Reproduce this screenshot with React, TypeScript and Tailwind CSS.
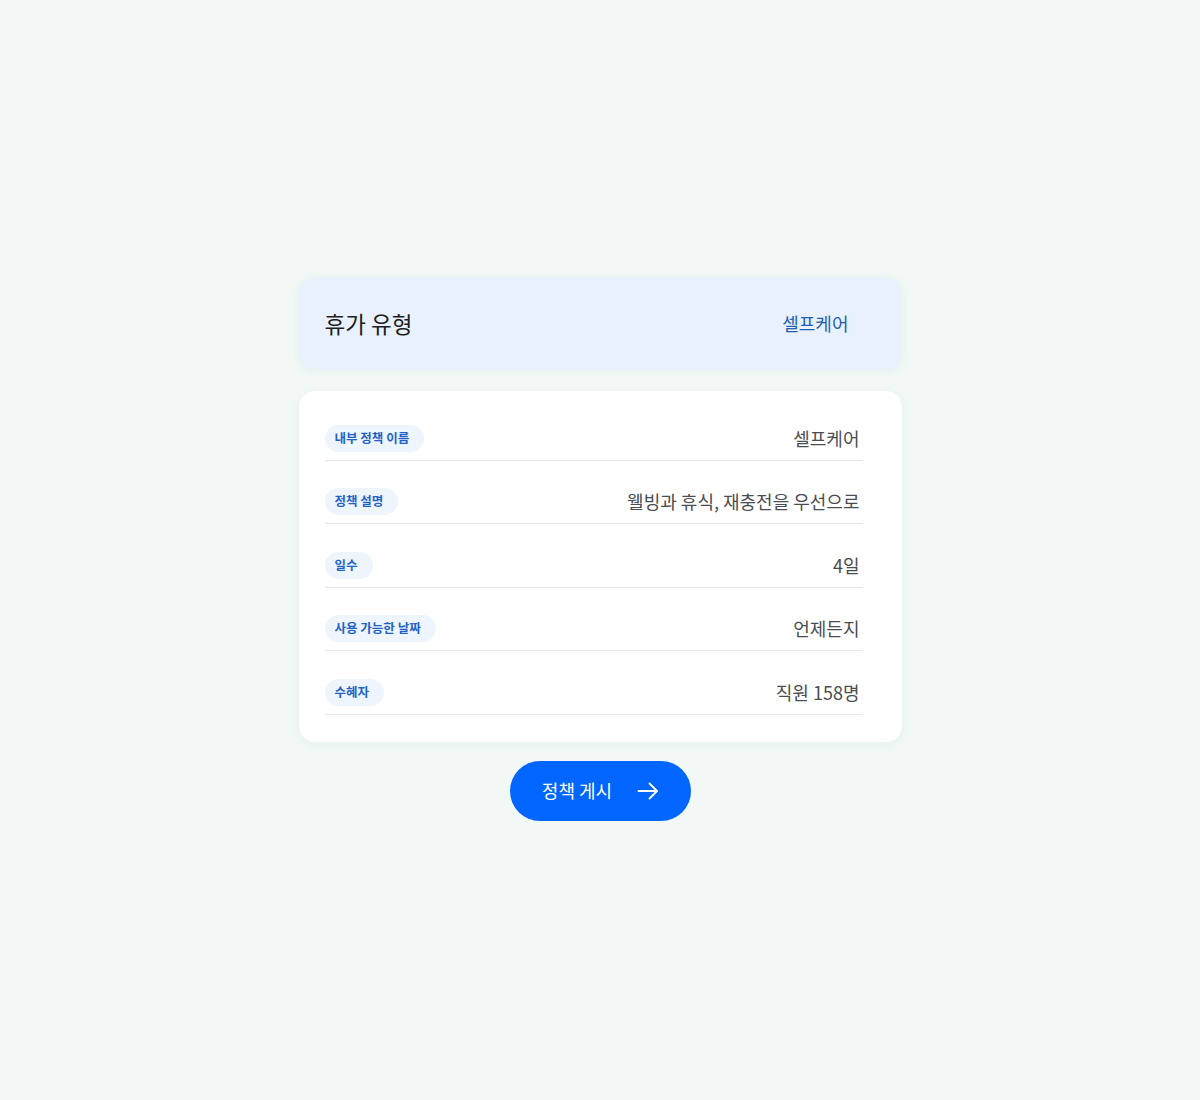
const rows = [
  { label: "내부 정책 이름", value: "셀프케어" },
  { label: "정책 설명", value: "웰빙과 휴식, 재충전을 우선으로" },
  { label: "일수", value: "4일" },
  { label: "사용 가능한 날짜", value: "언제든지" },
  { label: "수혜자", value: "직원 158명" },
];

export default function App() {
  return (
    <div
      className="flex min-h-[1100px] w-full flex-col items-center bg-[#f1f8f5] pt-[278px]"
      style={{ fontFamily: '"Noto Sans CJK KR", "Noto Sans", sans-serif' }}
    >
      <div className="flex w-[603px] flex-col items-center">
        {/* Header */}
        <div className="flex h-[91px] w-full items-center justify-between rounded-2xl bg-[#e8f1fd] pl-[26px] pr-[53px] shadow-[0_2px_8px_rgba(180,200,220,0.18)]">
          <h1 className="text-[22.5px] text-[#1e1e1e]">휴가 유형</h1>
          <span className="text-[18px] text-[#1d5fb5]">셀프케어</span>
        </div>

        {/* Details */}
        <div className="mt-[22px] w-full rounded-2xl bg-white pb-[27px] pl-[26px] pr-[39px] pt-[6px] shadow-[0_2px_10px_rgba(180,200,210,0.15)]">
          <ul>
            {rows.map((r) => (
              <li key={r.label} className="flex h-[63.5px] items-end justify-between border-b border-[#e6e9ec] pb-[8px]">
                <span className="flex h-[27px] items-center rounded-full bg-[#eef5fd] pl-[10px] pr-[15px] text-[12.5px] font-bold text-[#1f63c9]">
                  {r.label}
                </span>
                <span className="mr-[3px] flex h-[27px] items-center text-[18px] text-[#4a4d52]">{r.value}</span>
              </li>
            ))}
          </ul>
        </div>

        {/* Publish button */}
        <button className="mt-[19px] flex h-[60px] w-[181px] items-center justify-center gap-[24px] rounded-full bg-[#0066ff] pl-[2px] text-[18px] text-white">
          <span>정책 게시</span>
          <svg className="size-[24px]" viewBox="0 0 24 24" fill="none" stroke="currentColor" strokeWidth={1.8} strokeLinecap="round" strokeLinejoin="round">
            <line x1="2.5" y1="12" x2="21" y2="12" />
            <polyline points="13.5 4.5 21 12 13.5 19.5" />
          </svg>
        </button>
      </div>
    </div>
  );
}
